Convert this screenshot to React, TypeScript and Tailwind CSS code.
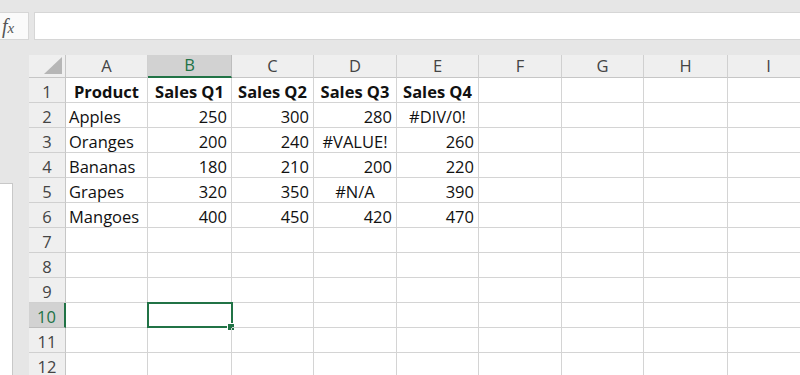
const COLS = [
  { key: "A", w: "w-[82px]" },
  { key: "B", w: "w-[84px]" },
  { key: "C", w: "w-[82px]" },
  { key: "D", w: "w-[83px]" },
  { key: "E", w: "w-[82px]" },
  { key: "F", w: "w-[83px]" },
  { key: "G", w: "w-[82px]" },
  { key: "H", w: "w-[84px]" },
  { key: "I", w: "w-[82px]" },
]

type Align = "left" | "right" | "center"
type Cell = { v: string; a: Align; b?: boolean }

const L = (v: string): Cell => ({ v, a: "left" })
const R = (v: string): Cell => ({ v, a: "right" })
const C = (v: string): Cell => ({ v, a: "center" })
const H = (v: string): Cell => ({ v, a: "center", b: true })

const DATA: Cell[][] = [
  [H("Product"), H("Sales Q1"), H("Sales Q2"), H("Sales Q3"), H("Sales Q4")],
  [L("Apples"), R("250"), R("300"), R("280"), C("#DIV/0!")],
  [L("Oranges"), R("200"), R("240"), C("#VALUE!"), R("260")],
  [L("Bananas"), R("180"), R("210"), R("200"), R("220")],
  [L("Grapes"), R("320"), R("350"), C("#N/A"), R("390")],
  [L("Mangoes"), R("400"), R("450"), R("420"), R("470")],
]

const alignClass: Record<Align, string> = {
  left: "justify-start pl-[3px]",
  right: "justify-end pr-[4px]",
  center: "justify-center",
}

function Corner() {
  return (
    <div className="relative h-[23px] w-[37px] shrink-0 border-b border-r border-[#c6c6c6] bg-[#efefef]">
      <svg className="absolute bottom-[3px] right-[3px]" width="18" height="17" viewBox="0 0 18 17">
        <polygon points="18,0 18,17 0,17" fill="#b6b6b6" />
      </svg>
    </div>
  )
}

function ColHeader({ label, w, active }: { label: string; w: string; active: boolean }) {
  return (
    <div
      className={`${w} h-[23px] shrink-0 flex items-center justify-center border-r text-[16.5px] ${
        active
          ? "bg-[#d2d2d2] text-[#217346] border-[#bdbdbd] border-b-2 border-b-[#217346]"
          : "bg-[#efefef] text-[#444] border-[#d0d0d0] border-b border-b-[#c6c6c6]"
      }`}
    >
      {label}
    </div>
  )
}

function RowHeader({ n, active }: { n: number; active: boolean }) {
  return (
    <div
      className={`w-[37px] h-[25px] shrink-0 flex items-end justify-center border-b leading-[21px] text-[16.5px] ${
        active
          ? "bg-[#d2d2d2] text-[#217346] border-[#bdbdbd] border-r-2 border-r-[#217346]"
          : "bg-[#efefef] text-[#444] border-[#d0d0d0] border-r border-r-[#c6c6c6]"
      }`}
    >
      {n}
    </div>
  )
}

function GridCell({ cell, w, selected }: { cell?: Cell; w: string; selected: boolean }) {
  return (
    <div
      className={`${w} relative h-[25px] shrink-0 flex items-end border-b border-r border-[#d4d4d4] leading-[21px] text-[16.5px] text-[#111] whitespace-nowrap ${
        cell ? alignClass[cell.a] : ""
      } ${cell?.b ? "font-bold" : ""}`}
    >
      {cell?.v}
      {selected && (
        <>
          <div className="absolute -left-[1px] -top-[1px] h-[26px] w-[86px] border-2 border-[#217346]" />
          <div className="absolute -bottom-[3px] -right-[3px] h-[6px] w-[6px] bg-[#217346] outline outline-1 outline-white" />
        </>
      )}
    </div>
  )
}

export default function App() {
  const rows = Array.from({ length: 12 }, (_, i) => i + 1)
  return (
    <div
      className="h-[375px] w-[800px] overflow-hidden bg-[#e6e6e6]"
      style={{ fontFamily: '"Open Sans", "Noto Sans", sans-serif' }}
    >
      {/* formula bar */}
      <div className="flex h-[40px] pt-[12px]">
        <div className="flex h-[28px] w-[29px] shrink-0 items-center border-y border-r border-[#d6d6d6] bg-[#fafafa] pl-[2px]">
          <span
            className="italic text-[20px] leading-none text-[#555]"
            style={{ fontFamily: '"Liberation Serif", serif' }}
          >
            f<span className="text-[15px]">x</span>
          </span>
        </div>
        <div className="ml-[5px] h-[28px] flex-1 border border-r-0 border-[#d6d6d6] bg-white" />
      </div>

      <div className="flex pt-[15px]">
        {/* left side panel edge */}
        <div className="w-[29px] shrink-0 pt-[128px]">
          <div className="h-[200px] w-[13px] border-r border-t border-[#c8c8c8] bg-white" />
        </div>

        <div className="flex flex-col">
          <div className="flex">
            <Corner />
            {COLS.map((c) => (
              <ColHeader key={c.key} label={c.key} w={c.w} active={c.key === "B"} />
            ))}
          </div>
          {rows.map((r) => (
            <div key={r} className="flex bg-white">
              <RowHeader n={r} active={r === 10} />
              {COLS.map((c, ci) => (
                <GridCell
                  key={c.key}
                  w={c.w}
                  cell={DATA[r - 1]?.[ci]}
                  selected={r === 10 && c.key === "B"}
                />
              ))}
            </div>
          ))}
        </div>
      </div>
    </div>
  )
}
